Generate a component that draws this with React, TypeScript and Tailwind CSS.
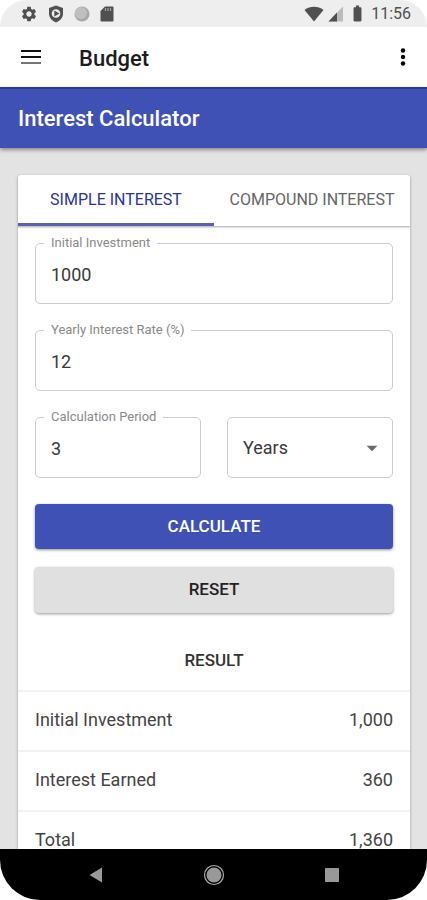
import { useState } from "react";
import type { ReactNode } from "react";
import { MdArrowDropDown, MdBatteryFull, MdSettings } from "react-icons/md";

type Mode = "simple" | "compound";

function StatusBar() {
  return (
    <div className="flex h-[27px] shrink-0 items-center rounded-t-[32px] bg-[#eeeeee] pr-4 pl-5 text-[#505050]">
      <div className="flex flex-1 items-center gap-2.5">
        <MdSettings className="size-[18px]" />
        <svg viewBox="0 0 16 18" className="h-[18px] w-4" aria-hidden="true">
          <path d="M8 0.500 15 3v5.500c0 4.200-3 7.400-7 9-4-1.600-7-4.800-7-9V3z" fill="#505050" />
          <circle cx="8" cy="8.500" r="4.300" fill="#eeeeee" />
          <path d="M6.300 5.500v6l5.200-3z" fill="#505050" />
        </svg>
        <svg viewBox="0 0 16 16" className="size-4" aria-hidden="true">
          <circle cx="8" cy="8" r="7.500" fill="#a8a8a8" />
          <circle cx="7" cy="7" r="6" fill="#bfbfbf" />
        </svg>
        <svg viewBox="0 0 14 16" className="h-4 w-3.5" aria-hidden="true">
          <path d="M5 0.500h7.500a1 1 0 0 1 1 1v13a1 1 0 0 1-1 1h-11a1 1 0 0 1-1-1V5z" fill="#505050" />
          <path d="M5.500 2v3M8 2v3M10.500 2v3" stroke="#a5a5a5" strokeWidth="1.200" />
        </svg>
      </div>
      <div className="flex items-center gap-1">
        <svg viewBox="0 0 20 16" className="h-4 w-5" aria-hidden="true">
          <path d="M0.500 4C6 -0.300 14 -0.300 19.500 4L10 15.500z" fill="#505050" />
        </svg>
        <svg viewBox="0 0 16 16" className="size-4" aria-hidden="true">
          <path d="M15 0.500v15H0.500z" fill="#bbbbbb" />
          <path d="M9 6.500v9H0.500z" fill="#505050" />
        </svg>
        <MdBatteryFull className="size-[19px]" />
        <span className="text-base">11:56</span>
      </div>
    </div>
  );
}

function AppBar() {
  return (
    <header className="flex h-[60px] shrink-0 items-center bg-white pr-[18px] pl-5">
      <button type="button" aria-label="Open menu">
        <svg viewBox="0 0 22 16" className="h-4 w-[22px]" aria-hidden="true">
          <path d="M1 2h20M1 8h20" stroke="#111111" strokeWidth="2" />
          <path d="M1 14h20" stroke="#757575" strokeWidth="2" />
        </svg>
      </button>
      <h1 className="ml-[37px] flex-1 pt-0.5 text-[22px] font-medium text-[#1c1c1c]">Budget</h1>
      <button type="button" aria-label="More options">
        <svg viewBox="0 0 12 20" className="h-5 w-3" aria-hidden="true">
          <circle cx="6" cy="3.500" r="2.200" />
          <circle cx="6" cy="10" r="2.200" />
          <circle cx="6" cy="16.500" r="2.200" />
        </svg>
      </button>
    </header>
  );
}

function Tab({ active, onSelect, children }: { active: boolean; onSelect: () => void; children: ReactNode }) {
  return (
    <button
      type="button"
      role="tab"
      aria-selected={active}
      onClick={onSelect}
      className={`h-[51px] flex-1 border-b-3 pt-0.5 text-base whitespace-nowrap ${
        active ? "border-[#5b61ad] text-[#2a32a8]" : "border-transparent text-[#666666]"
      }`}
    >
      {children}
    </button>
  );
}

function Field({ id, label, value, onChange }: { id: string; label: string; value: string; onChange: (v: string) => void }) {
  return (
    <fieldset className="h-[69px] min-w-0 rounded-[5px] border border-[#cccccc] px-2">
      <legend className="px-[7px] text-[13px] leading-4 text-[#8a8a8a]">
        <label htmlFor={id}>{label}</label>
      </legend>
      <input
        id={id}
        inputMode="decimal"
        value={value}
        onChange={(e) => onChange(e.target.value)}
        className="h-[46px] w-full bg-transparent px-[7px] text-lg text-[#3a3a3a] outline-none"
      />
    </fieldset>
  );
}

function ResultRow({ name, value }: { name: string; value: string }) {
  return (
    <tr className="h-[60px] border-t-2 border-[#f1f1f1]">
      <th scope="row" className="pb-[3px] pl-[17px] text-left font-normal">
        {name}
      </th>
      <td className="pr-[17px] pb-[3px] text-right">{value}</td>
    </tr>
  );
}

export default function App() {
  const [mode, setMode] = useState<Mode>("simple");
  const [amount, setAmount] = useState("1000");
  const [rate, setRate] = useState("12");
  const [period, setPeriod] = useState("3");
  const [unit, setUnit] = useState("Years");

  const principal = Number(amount) || 0;
  const years = (Number(period) || 0) / (unit === "Years" ? 1 : 12);
  const yearly = (Number(rate) || 0) / 100;
  const interest =
    mode === "simple" ? principal * yearly * years : principal * (Math.pow(1 + yearly, years) - 1);
  const format = (n: number) => n.toLocaleString("en-US", { maximumFractionDigits: 2 });

  const reset = () => {
    setAmount("");
    setRate("");
    setPeriod("");
  };

  return (
    <div className="flex h-screen flex-col overflow-hidden bg-white font-[Roboto,sans-serif]">
      <StatusBar />
      <AppBar />
      <div className="z-10 flex h-[61px] shrink-0 items-center border-t-2 border-[#2a3a98] bg-[#3f51b5] px-[18px] shadow-[0_2px_4px_rgba(0,0,0,0.4)]">
        <h2 className="text-[22px] font-medium text-white">Interest Calculator</h2>
      </div>

      <main className="min-h-0 flex-1 overflow-hidden bg-[#e3e3e3] pt-[27px] pr-[17px] pl-[18px]">
        <div className="rounded-t-[3px] bg-white shadow-[0_1px_3px_rgba(0,0,0,0.35)]">
          <div role="tablist" className="flex border-b border-[#c4c4c4] shadow-[0_1px_1px_rgba(0,0,0,0.12)]">
            <Tab active={mode === "simple"} onSelect={() => setMode("simple")}>
              SIMPLE INTEREST
            </Tab>
            <Tab active={mode === "compound"} onSelect={() => setMode("compound")}>
              COMPOUND INTEREST
            </Tab>
          </div>

          <form className="flex flex-col gap-[18px] px-[17px] pt-2" onSubmit={(e) => e.preventDefault()}>
            <Field id="amount" label="Initial Investment" value={amount} onChange={setAmount} />
            <Field id="rate" label="Yearly Interest Rate (%)" value={rate} onChange={setRate} />
            <div className="grid grid-cols-2 items-end gap-[26px]">
              <Field id="period" label="Calculation Period" value={period} onChange={setPeriod} />
              <div className="grid h-[61px] items-center">
                <select
                  aria-label="Period unit"
                  value={unit}
                  onChange={(e) => setUnit(e.target.value)}
                  className="col-start-1 row-start-1 h-full w-full appearance-none rounded-[5px] border border-[#cccccc] bg-white px-[15px] text-lg text-[#3a3a3a]"
                >
                  <option>Years</option>
                  <option>Months</option>
                </select>
                <MdArrowDropDown className="pointer-events-none col-start-1 row-start-1 mr-2 size-[26px] justify-self-end text-[#6b6b6b]" />
              </div>
            </div>
            <button
              type="submit"
              className="mt-2 h-[45px] rounded-[4px] bg-[#3f51b5] text-[17px] font-medium text-white shadow-[0_1px_3px_rgba(0,0,0,0.45)]"
            >
              CALCULATE
            </button>
            <button
              type="button"
              onClick={reset}
              className="h-[46px] rounded-[4px] bg-[#e0e0e0] text-[17px] font-medium text-[#222222] shadow-[0_1px_3px_rgba(0,0,0,0.4)]"
            >
              RESET
            </button>
          </form>

          <table className="mt-[17px] w-full border-collapse text-lg text-[#444444]">
            <caption className="h-[60px] text-[17px] leading-[60px] font-medium text-[#333333]">RESULT</caption>
            <tbody>
              <ResultRow name="Initial Investment" value={format(principal)} />
              <ResultRow name="Interest Earned" value={format(interest)} />
              <ResultRow name="Total" value={format(principal + interest)} />
            </tbody>
          </table>
        </div>
      </main>

      <nav className="z-10 grid h-[51px] shrink-0 grid-cols-[1fr_22px_1fr] items-center gap-[100px] rounded-b-[40px] bg-black">
        <button type="button" aria-label="Back" className="justify-self-end">
          <svg viewBox="0 0 14 16" className="h-4 w-3.5" aria-hidden="true">
            <path d="M13 0.500v15L0.500 8z" fill="#999999" />
          </svg>
        </button>
        <button type="button" aria-label="Home">
          <svg viewBox="0 0 22 22" className="size-[22px]" aria-hidden="true">
            <circle cx="11" cy="11" r="9.500" fill="none" stroke="#aaaaaa" strokeWidth="1.200" />
            <circle cx="11" cy="11" r="7.500" fill="#999999" />
          </svg>
        </button>
        <button type="button" aria-label="Recent apps" className="justify-self-start">
          <svg viewBox="0 0 14 14" className="size-3.5" aria-hidden="true">
            <rect width="14" height="14" rx="1" fill="#999999" />
          </svg>
        </button>
      </nav>
    </div>
  );
}
